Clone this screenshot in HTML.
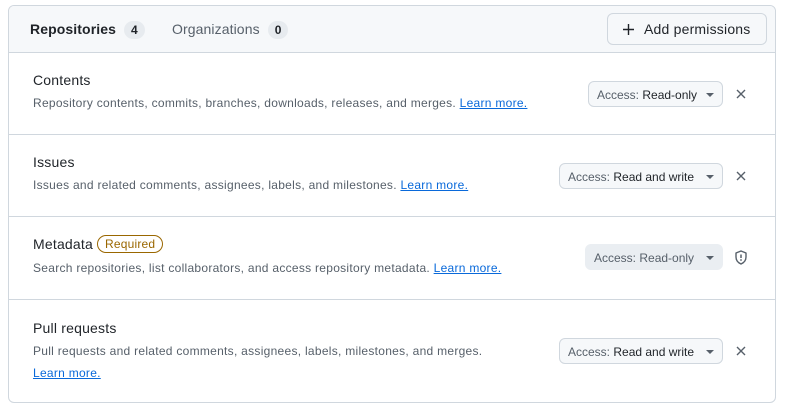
<!DOCTYPE html>
<html><head><style>
*{box-sizing:border-box;margin:0;padding:0}
body{width:792px;height:417px;background:#fff;font-family:"Liberation Sans",sans-serif;color:#1f2328;position:relative;overflow:hidden}
.box{position:absolute;left:8px;top:5px;width:768px;height:398px;border:1px solid #d0d7de;border-radius:6px;overflow:hidden}
.hdr{position:absolute;left:0;top:0;width:100%;height:47px;background:#f6f8fa;border-bottom:1px solid #d0d7de}
.tab{position:absolute;top:15px;font-size:14px;letter-spacing:0.1px}
.cnt{display:inline-block;background:#e7ebef;border-radius:10px;font-size:12px;font-weight:bold;padding:2px 7px;margin-left:8px;color:#1f2328}
.btn{position:absolute;left:598px;top:7px;width:160px;height:32px;border:1px solid #d0d7de;border-radius:6px;background:#f6f8fa;font-size:14px;padding:7px 0 0 36px;letter-spacing:0.2px}
.row{position:absolute;left:0;width:100%;border-top:1px solid #d0d7de}
.t{position:absolute;left:24px;font-size:14px;letter-spacing:0.2px}
.d{position:absolute;left:24px;font-size:12px;color:#57606a;white-space:nowrap;letter-spacing:0.28px}
.d a{color:#0969da;text-decoration:underline}
.dd{position:absolute;height:26px;border:1px solid #d0d7de;border-radius:6px;background:#f6f8fa;font-size:12px;padding:6px 0 0 8px;white-space:nowrap}
.dd span{color:#57606a}
.dd:after{content:"";position:absolute;right:8px;top:11px;border:4px solid transparent;border-top-color:#57606a}
.x{position:absolute;left:726px;width:12px;height:12px}
.req{display:inline-block;border:1px solid #9a6700;color:#9a6700;border-radius:10px;font-size:12px;padding:1px 7px;margin-left:4px;vertical-align:1px;letter-spacing:0.2px}
</style></head><body>
<div class="box">
<div class="hdr">
<div class="tab" style="left:21px;font-weight:bold">Repositories<span class="cnt">4</span></div>
<div class="tab" style="left:163px;color:#57606a">Organizations<span class="cnt">0</span></div>
<div class="btn"><svg style="position:absolute;left:14px;top:9px" width="13" height="13" viewBox="0 0 13 13"><path d="M6.5 1v11M1 6.5h11" stroke="#1f2328" stroke-width="1.4"/></svg>Add permissions</div>
</div>
<div class="row" style="top:47px;height:82px;border-top:none">
<div class="t" style="top:19px">Contents</div>
<div class="d" style="top:43px">Repository contents, commits, branches, downloads, releases, and merges. <a>Learn more.</a></div>
<div class="dd" style="left:579px;top:28px;width:135px"><span>Access:</span> Read-only</div>
<svg class="x" style="top:35px" viewBox="0 0 12 12"><path d="M2 2l8 8M10 2l-8 8" stroke="#57606a" stroke-width="1.4"/></svg>
</div>
<div class="row" style="top:128px;height:83px">
<div class="t" style="top:19px">Issues</div>
<div class="d" style="top:43px">Issues and related comments, assignees, labels, and milestones. <a>Learn more.</a></div>
<div class="dd" style="left:550px;top:28px;width:164px"><span>Access:</span> Read and write</div>
<svg class="x" style="top:35px" viewBox="0 0 12 12"><path d="M2 2l8 8M10 2l-8 8" stroke="#57606a" stroke-width="1.4"/></svg>
</div>
<div class="row" style="top:210px;height:83px">
<div class="t" style="top:18px">Metadata<span class="req">Required</span></div>
<div class="d" style="top:44px">Search repositories, list collaborators, and access repository metadata. <a>Learn more.</a></div>
<div class="dd" style="left:576px;top:27px;width:138px;background:#eaeef2;border-color:#eaeef2;color:#57606a"><span>Access:</span> Read-only</div>
<svg style="position:absolute;left:725px;top:33px" width="14" height="15" viewBox="0 0 14 15"><path d="M7 1L2 3v4c0 3.5 2.3 5.8 5 7 2.7-1.2 5-3.5 5-7V3z" fill="none" stroke="#57606a" stroke-width="1.4" stroke-linejoin="round"/><path d="M7 4.5v3.5" stroke="#57606a" stroke-width="1.5"/><circle cx="7" cy="10" r=".9" fill="#57606a"/></svg>
</div>
<div class="row" style="top:293px;height:105px">
<div class="t" style="top:20px">Pull requests</div>
<div class="d" style="top:44px">Pull requests and related comments, assignees, labels, milestones, and merges.</div>
<div class="d" style="top:66px"><a>Learn more.</a></div>
<div class="dd" style="left:550px;top:38px;width:164px"><span>Access:</span> Read and write</div>
<svg class="x" style="top:45px" viewBox="0 0 12 12"><path d="M2 2l8 8M10 2l-8 8" stroke="#57606a" stroke-width="1.4"/></svg>
</div>
</div>
</body></html>
